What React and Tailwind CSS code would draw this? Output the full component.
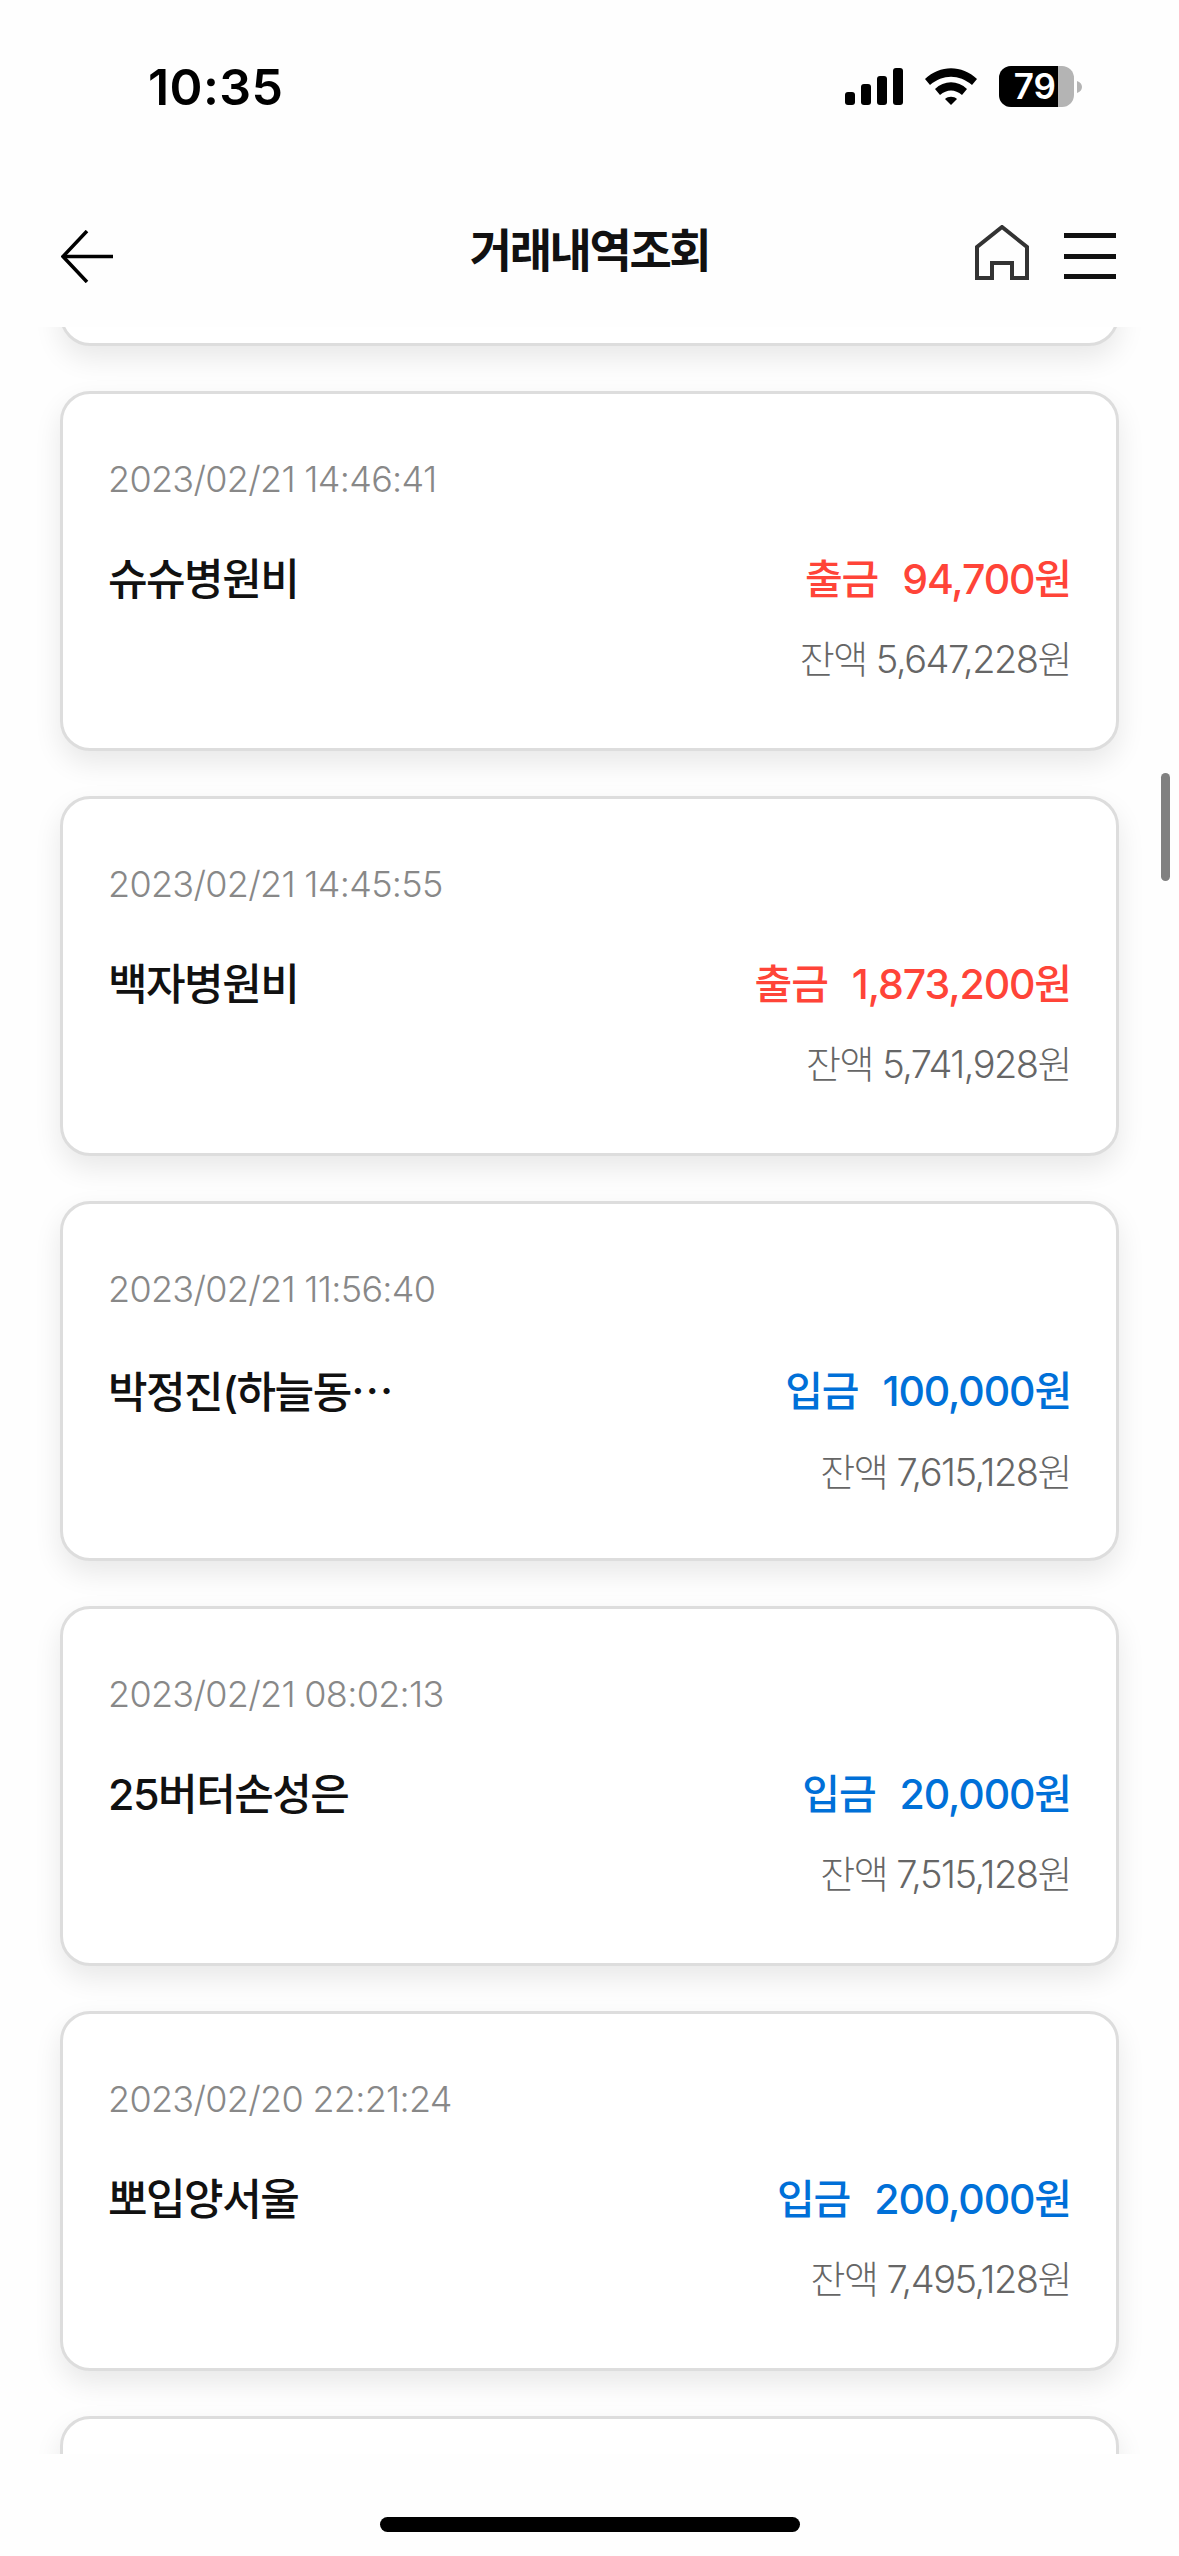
const rows = [
  { date: "2023/02/21 14:46:41", name: "슈슈병원비", type: "출금", amount: "94,700원", balance: "잔액 5,647,228원" },
  { date: "2023/02/21 14:45:55", name: "백자병원비", type: "출금", amount: "1,873,200원", balance: "잔액 5,741,928원" },
  { date: "2023/02/21 11:56:40", name: "박정진(하늘동", more: true, type: "입금", amount: "100,000원", balance: "잔액 7,615,128원" },
  { date: "2023/02/21 08:02:13", name: "25버터손성은", type: "입금", amount: "20,000원", balance: "잔액 7,515,128원" },
  { date: "2023/02/20 22:21:24", name: "뽀입양서울", type: "입금", amount: "200,000원", balance: "잔액 7,495,128원" },
];

const cardBox = "h-[360px] shrink-0 rounded-[30px] border-[3px] border-[#dddddd] bg-white shadow-[0_12px_28px_rgba(0,0,0,0.09)]";

function Card({ date, name, more, type, amount, balance }) {
  const color = type === "출금" ? "text-[#ff4438]" : "text-[#0070d8]";
  return (
    <div className={`${cardBox} flex flex-col pl-[45px] pr-[45px] pt-[60px]`}>
      <div className="font-['Inter','Noto_Sans_CJK_KR',sans-serif] text-[36px] leading-[50px] font-light tracking-[-0.7px] text-[#888888]">{date}</div>
      <div className="mt-[45px] flex items-center justify-between">
        <div className="font-['Inter','Noto_Sans_CJK_KR',sans-serif] text-[43px] leading-[60px] font-medium tracking-[-1.5px] text-[#111111]">
          {name}
          {more && <span className="font-['Noto_Sans_CJK_KR',sans-serif]">…</span>}
        </div>
        <div className={`flex items-center gap-[24px] font-['Inter','Noto_Sans_CJK_KR',sans-serif] text-[41px] leading-[60px] font-medium tracking-[-1.1px] ${color}`}>
          <span>{type}</span>
          <span>{amount}</span>
        </div>
      </div>
      <div className="mt-[25px] text-right font-['Inter','Noto_Sans_CJK_KR',sans-serif] text-[38px] leading-[50px] font-light tracking-[-1.5px] text-[#666666]">{balance}</div>
    </div>
  );
}

export default function App() {
  return (
    <div className="relative flex h-[2556px] w-[1179px] flex-col overflow-hidden bg-[#fefefe] font-['Noto_Sans_CJK_KR','Noto_Sans',sans-serif]">
      <div className="flex h-[187px] shrink-0 items-start justify-between pt-[58px] pl-[148px] pr-[97px]">
        <div className="font-['Inter',sans-serif] text-[50px] leading-[58px] font-semibold tracking-[0.4px] text-black">10:35</div>
        <div className="mt-[8px] flex items-center">
          <svg width="58" height="38" viewBox="0 0 58 38" fill="black">
            <rect x="0" y="24" width="10" height="13" rx="3" />
            <rect x="16" y="16" width="10" height="21" rx="3" />
            <rect x="32" y="8" width="10" height="29" rx="3" />
            <rect x="48" y="0" width="10" height="37" rx="3" />
          </svg>
          <svg className="ml-[22px]" width="52" height="38" viewBox="0 0 52 38" fill="black">
            <path d="M0 11 C15 -3.5 37 -3.5 52 11 L47 17 C34 6 18 6 5 17Z" />
            <path d="M10 21 C19 12 33 12 42 21 L37 27 C30 21 22 21 15 27Z" />
            <path d="M20 31 C23 28 29 28 32 31 L26 37Z" />
          </svg>
          <div className="ml-[22px] flex h-[41px] w-[75px] overflow-hidden rounded-[12px] bg-[#b4b4b4]">
            <div className="flex h-full w-[59px] items-center justify-end bg-black pr-[2px] font-['Inter',sans-serif] text-[35px] leading-none font-semibold text-white">79</div>
          </div>
          <svg className="ml-[3px]" width="5" height="12" viewBox="0 0 5 12" fill="#b4b4b4">
            <path d="M0 0 C3 1 5 3 5 6 C5 9 3 11 0 12Z" />
          </svg>
        </div>
      </div>

      <div className="flex h-[140px] shrink-0 items-start justify-between pl-[61px] pr-[63px]">
        <svg className="mt-[43px]" width="52" height="53" viewBox="0 0 52 53" fill="none" stroke="black" strokeWidth="3.5">
          <path d="M26 1 L2 26.5 L26 52" />
          <path d="M2 26.5 H52" />
        </svg>
        <div className="absolute left-0 right-0 top-[217px] text-center text-[46px] leading-[60px] font-bold tracking-[-2.4px] text-[#111111]">거래내역조회</div>
        <div className="flex items-start">
          <svg className="mt-[38px]" width="54" height="55" viewBox="0 0 54 55" fill="none" stroke="#333333" strokeWidth="4">
            <path d="M2 53 V22 L27 2 L52 22 V53 H37 V38 H17 V53 Z" strokeLinejoin="miter" />
          </svg>
          <div className="ml-[35px] mt-[46px] flex h-[46px] w-[52px] flex-col justify-between">
            <div className="h-[5px] bg-[#111111]" />
            <div className="h-[5px] bg-[#111111]" />
            <div className="h-[5px] bg-[#111111]" />
          </div>
        </div>
      </div>

      <div className="h-[2127px] shrink-0 overflow-hidden">
        <div className="mt-[-341px] flex flex-col gap-[45px] pl-[60px] pr-[60px]">
          <div className={cardBox} />
          {rows.map((r) => (
            <Card key={r.date} {...r} />
          ))}
          <div className={cardBox} />
        </div>
      </div>

      <div className="absolute left-[1161px] top-[773px] h-[108px] w-[9px] rounded-full bg-[#808080]" />
      <div className="absolute bottom-[24px] left-[380px] h-[15px] w-[420px] rounded-full bg-black" />
    </div>
  );
}
